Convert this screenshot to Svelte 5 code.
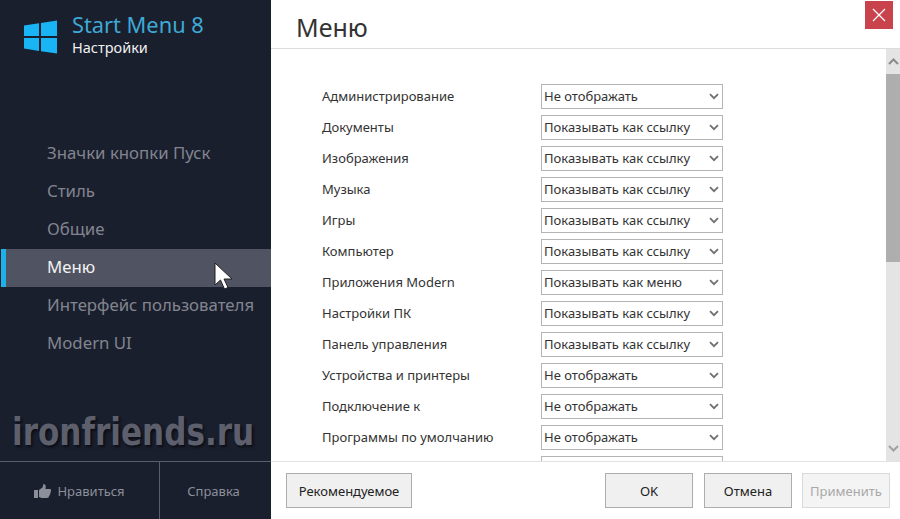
<script>
    const nav = ['Значки кнопки Пуск', 'Стиль', 'Общие', 'Меню', 'Интерфейс пользователя', 'Modern UI'];
    const link = 'Показывать как ссылку';
    const none = 'Не отображать';
    const rows = [
        ['Администрирование', none],
        ['Документы', link],
        ['Изображения', link],
        ['Музыка', link],
        ['Игры', link],
        ['Компьютер', link],
        ['Приложения Modern', 'Показывать как меню'],
        ['Настройки ПК', link],
        ['Панель управления', link],
        ['Устройства и принтеры', none],
        ['Подключение к', none],
        ['Программы по умолчанию', none],
        ['', '']
    ];
</script>

<div class="window">
    <aside class="sidebar">
        <div class="brand">
            <svg class="logo" width="34" height="34" viewBox="0 0 34 34">
                <path d="M0 5.5 15 3.2V16H0zM17 2.9 33 .5V16H17zM0 18H15V31L0 28.6zM17 18H33V33.5L17 31.2z" fill="#19b4f5"/>
            </svg>
            <div>
                <div class="app-name">Start Menu 8</div>
                <div class="app-sub">Настройки</div>
            </div>
        </div>
        <nav>
            {#each nav as item}
                <div class="nav-item" class:active={item === 'Меню'}>{item}</div>
            {/each}
        </nav>
        <div class="side-footer">
            <div class="like">
                <svg width="17" height="14" viewBox="0 0 17 14">
                    <path d="M0 6H4V14H0zM5 6 8.500 3.500 9.500 0C11.500 0 12 1.500 11.500 5H16C17.500 5 17.500 7 16.500 7.500 17 8.500 16.500 9.500 16 10 16 11 15.500 11.800 15 12 15 13.300 14.300 14 13 14H7.500L5 13z" fill="#8b8f99"/>
                </svg>
                Нравиться
            </div>
            <div class="help">Справка</div>
        </div>
        <div class="watermark">ironfriends.ru</div>
        <svg class="cursor" width="20" height="28" viewBox="0 0 20 28">
            <path d="M1 1V23L6.500 18 10.500 27 14 25.500 10 17H18z" fill="#fff" stroke="#222" stroke-width="1"/>
        </svg>
    </aside>

    <main>
        <header>
            <h1>Меню</h1>
            <button class="close" aria-label="Закрыть">
                <svg width="14" height="14" viewBox="0 0 14 14">
                    <path d="M1 1 13 13M13 1 1 13" stroke="#fff" stroke-width="1.300" fill="none"/>
                </svg>
            </button>
        </header>
        <div class="content">
            <div class="list">
                {#each rows as row}
                    <div class="row">
                        <span class="label">{row[0]}</span>
                        <div class="select">
                            <span>{row[1]}</span>
                            <svg width="10" height="7" viewBox="0 0 10 7">
                                <path d="M1 1.200 5 5.200 9 1.200" stroke="#707070" stroke-width="1.800" fill="none"/>
                            </svg>
                        </div>
                    </div>
                {/each}
            </div>
            <div class="scrollbar">
                <div class="arrow">
                    <svg width="11" height="7" viewBox="0 0 11 7"><path d="M1 6 5.500 1.500 10 6" stroke="#8a8a8a" stroke-width="2" fill="none"/></svg>
                </div>
                <div class="thumb"></div>
                <div class="track"></div>
                <div class="arrow">
                    <svg width="11" height="7" viewBox="0 0 11 7"><path d="M1 1 5.500 5.500 10 1" stroke="#a0a0a0" stroke-width="2" fill="none"/></svg>
                </div>
            </div>
        </div>
        <footer>
            <button class="wide">Рекомендуемое</button>
            <div class="actions">
                <button class="ok">OK</button>
                <button>Отмена</button>
                <button class="disabled">Применить</button>
            </div>
        </footer>
    </main>
</div>

<style>
    :global(body) {
        margin: 0;
        background: #fff;
    }
    .window {
        display: flex;
        width: 900px;
        height: 519px;
        overflow: hidden;
        font-family: "Noto Sans", "Open Sans", sans-serif;
    }
    .sidebar {
        position: relative;
        width: 271px;
        flex: none;
        display: flex;
        flex-direction: column;
        background: #1a1f2e;
    }
    .brand {
        display: flex;
        gap: 14px;
        height: 135px;
        padding: 14px 0 0 24px;
        box-sizing: border-box;
    }
    .logo {
        margin-top: 6px;
    }
    .app-name {
        font-size: 21.800px;
        line-height: 22px;
        color: #3fa9d6;
    }
    .app-sub {
        margin-top: 1px;
        font-size: 14.500px;
        line-height: 20px;
        color: #f0f0f0;
    }
    .nav-item {
        height: 38px;
        line-height: 36px;
        padding-left: 47px;
        font-size: 16.800px;
        color: #82858f;
    }
    .nav-item.active {
        margin-left: 1px;
        padding-left: 41px;
        border-left: 5px solid #1cb1e8;
        background: #4f5362;
        color: #f2f2f2;
    }
    .side-footer {
        margin-top: auto;
        height: 58px;
        box-sizing: border-box;
        display: flex;
        border-top: 1px solid #5a5e6c;
        font-size: 13px;
        color: #8b8f99;
    }
    .like, .help {
        display: flex;
        align-items: center;
        justify-content: center;
    }
    .like {
        width: 160px;
        gap: 6px;
        box-sizing: border-box;
        border-right: 1px solid #5a5e6c;
    }
    .help {
        flex: 1;
        padding-right: 4px;
    }
    .watermark {
        position: absolute;
        left: 12px;
        top: 408px;
        font-family: "DejaVu Sans", sans-serif;
        font-size: 37px;
        line-height: 50px;
        font-weight: 700;
        transform-origin: left center;
        transform: scaleX(0.84);
        color: #5d606c;
        text-shadow: 2px 2px 3px #0b0d14;
        white-space: nowrap;
    }
    .cursor {
        position: absolute;
        left: 214px;
        top: 262px;
    }
    main {
        flex: 1;
        min-width: 0;
        display: flex;
        flex-direction: column;
    }
    header {
        position: relative;
        height: 49px;
        flex: none;
        box-sizing: border-box;
        border-bottom: 1px solid #dcdcdc;
        padding-left: 25px;
    }
    h1 {
        margin: 0;
        font-size: 25px;
        font-weight: 400;
        line-height: 54px;
        color: #333;
    }
    .close {
        position: absolute;
        top: 1px;
        right: 7px;
        width: 28px;
        height: 28px;
        padding: 0;
        border: none;
        background: #c9434c;
        display: flex;
        align-items: center;
        justify-content: center;
    }
    .content {
        flex: 1;
        min-height: 0;
        display: flex;
        overflow: hidden;
    }
    .list {
        flex: 1;
        padding: 35px 0 0 51px;
    }
    .row {
        display: flex;
        align-items: center;
        height: 25px;
        margin-bottom: 6px;
    }
    .label {
        width: 219px;
        padding-bottom: 2px;
        font-size: 13px;
        color: #333;
        white-space: nowrap;
    }
    .select {
        width: 182px;
        height: 25px;
        box-sizing: border-box;
        flex: none;
        display: flex;
        align-items: center;
        justify-content: space-between;
        padding: 0 3px 2px 2px;
        border: 1px solid #b4b4b4;
        font-size: 13px;
        color: #333;
    }
    .select svg {
        margin-top: 2px;
    }
    .scrollbar {
        width: 14px;
        flex: none;
        display: flex;
        flex-direction: column;
        background: #e4e4e4;
    }
    .arrow {
        height: 25px;
        flex: none;
        display: flex;
        align-items: center;
        justify-content: center;
    }
    .thumb {
        height: 188px;
        flex: none;
        background: #aeaeae;
    }
    .track {
        flex: 1;
    }
    footer {
        height: 58px;
        flex: none;
        box-sizing: border-box;
        border-top: 1px solid #e2e2e2;
        display: flex;
        justify-content: space-between;
        padding: 11px 10px 0 15px;
    }
    .actions {
        display: flex;
        gap: 10px;
    }
    .ok {
        margin-right: 1px;
    }
    button {
        font-family: inherit;
    }
    footer button {
        width: 88px;
        height: 35px;
        padding: 0;
        border: 1px solid #adadad;
        background: #f0f0f0;
        font-size: 13px;
        color: #222;
    }
    footer button.wide {
        width: 126px;
    }
    footer button.disabled {
        border-color: #d9d9d9;
        background: #f4f4f4;
        color: #a8a8a8;
    }
</style>
